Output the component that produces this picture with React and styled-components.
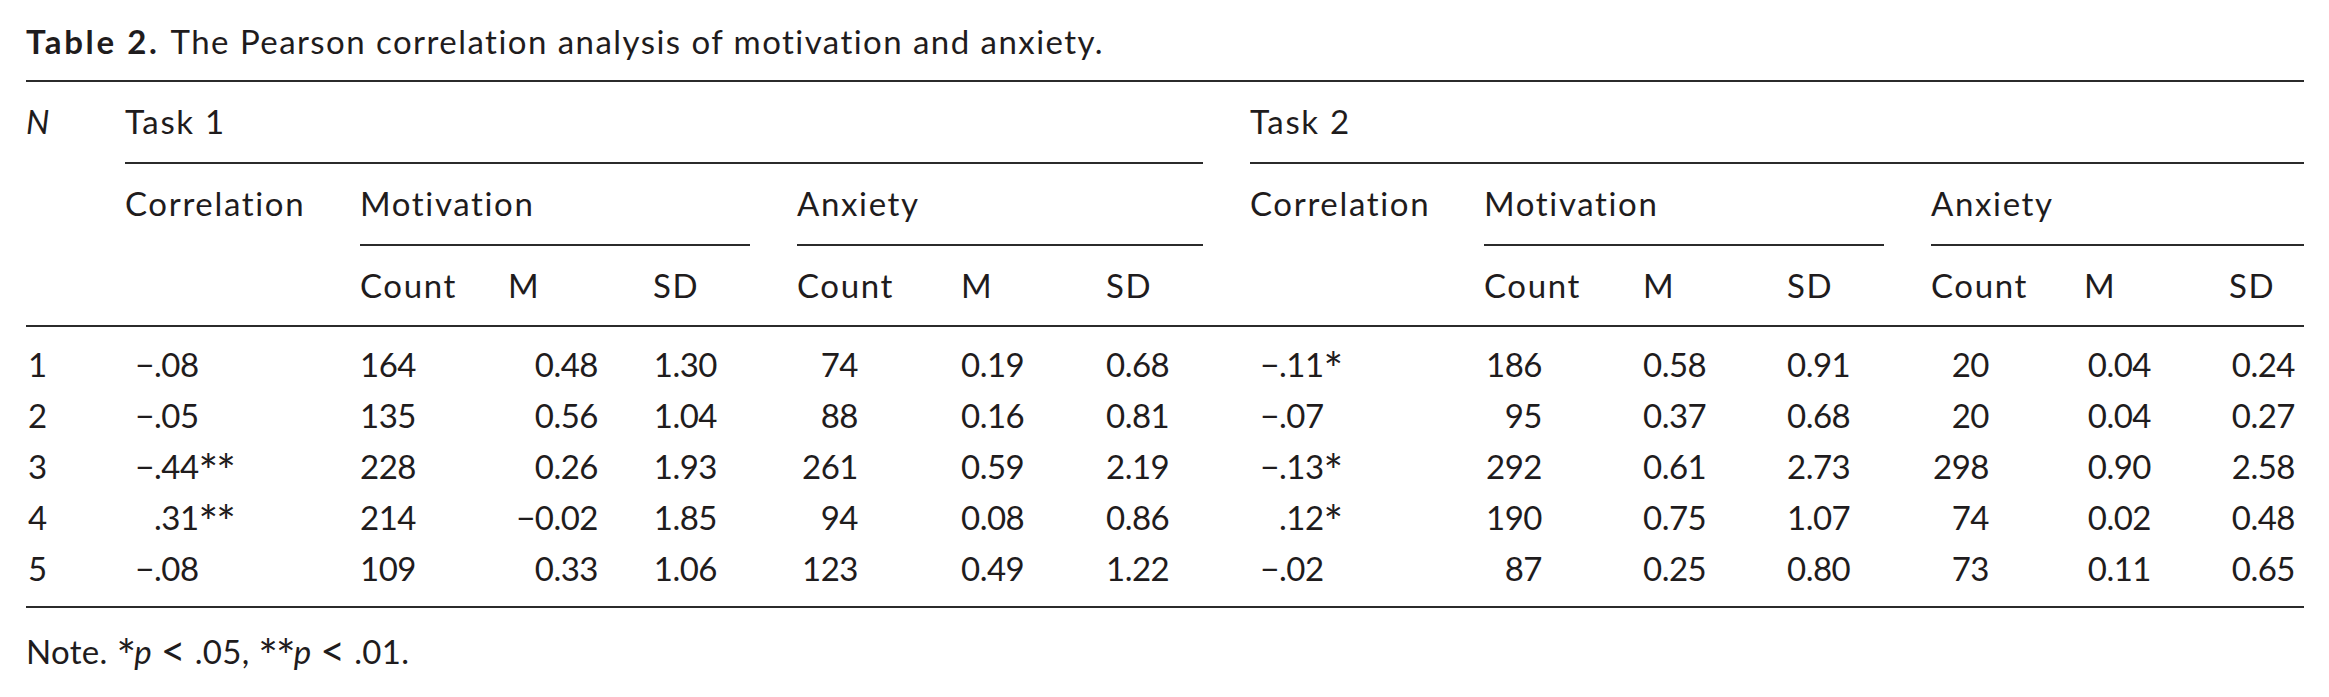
import React from 'react';
import styled, { createGlobalStyle } from 'styled-components';

const COLS = '99px 235px 148px 145px 144px 164px 145px 144px 234px 159px 144px 144px 153px 145px 75px';
const RULE = '2px solid #2b2b2b';

const GlobalStyle = createGlobalStyle`
  body {
    margin: 0;
    background: #ffffff;
    color: #1f1c1d;
    font-family: Lato, 'Open Sans', sans-serif;
  }
`;

const Page = styled.div`
  width: 2278px;
  padding: 21px 0 0 26px;
  font-size: 33px;
  letter-spacing: 0.05em;
`;

// Caption above the table
const Caption = styled.div`
  line-height: 40px;
  margin-bottom: 19px;
  white-space: nowrap;
  letter-spacing: 0.044em;
`;

const CaptionLabel = styled.span`
  font-weight: 700;
  letter-spacing: 0.08em;
  margin-right: 11px;
`;

const Table = styled.div`
  border-top: ${RULE};
`;

// Header block: three rows of spanning labels
const Head = styled.div`
  display: grid;
  grid-template-columns: ${COLS};
  grid-template-rows: 82px 82px 79px;
  border-bottom: ${RULE};
`;

const HeadCell = styled.div`
  grid-column: ${p => p.$col} / span ${p => p.$span || 1};
  grid-row: ${p => p.$row};
  line-height: 79px;
  white-space: nowrap;
  border-bottom: ${p => (p.$rule ? RULE : 'none')};
  margin-right: ${p => (p.$gap ? 47 : 0)}px;
`;

const Italic = styled.span`
  font-style: italic;
`;

// Data block
const Body = styled.div`
  display: grid;
  grid-template-columns: ${COLS};
  grid-auto-rows: 51px;
  line-height: 51px;
  letter-spacing: -0.5px;
  padding: 12px 0 12px;
  border-bottom: ${RULE};
`;

const Cell = styled.div`
  white-space: nowrap;
  padding-left: ${p => p.$pad || 0}px;
`;

const Num = styled.span`
  display: inline-block;
  width: ${p => p.$w}px;
  text-align: right;
`;

const Sign = styled.span`
  display: inline-block;
  width: 20px;
  text-align: right;
`;

const Star = styled.span`
  font-size: 1.4em;
  line-height: 0;
  letter-spacing: -2px;
  vertical-align: -9px;
`;

const Less = styled.span`
  font-size: 1.3em;
  line-height: 0;
  vertical-align: -2px;
`;

const Note = styled.p`
  margin: 23px 0 0;
  line-height: 40px;
  letter-spacing: 0.01em;
`;

const T1_W = [54, 90, 64, 61, 62, 62];
const T2_W = [58, 62, 60, 58, 67, 66];

const rows = [
  { n: '1', t1: ['−.08', '164', '0.48', '1.30', '74', '0.19', '0.68'], t2: ['−.11*', '186', '0.58', '0.91', '20', '0.04', '0.24'] },
  { n: '2', t1: ['−.05', '135', '0.56', '1.04', '88', '0.16', '0.81'], t2: ['−.07', '95', '0.37', '0.68', '20', '0.04', '0.27'] },
  { n: '3', t1: ['−.44**', '228', '0.26', '1.93', '261', '0.59', '2.19'], t2: ['−.13*', '292', '0.61', '2.73', '298', '0.90', '2.58'] },
  { n: '4', t1: ['.31**', '214', '−0.02', '1.85', '94', '0.08', '0.86'], t2: ['.12*', '190', '0.75', '1.07', '74', '0.02', '0.48'] },
  { n: '5', t1: ['−.08', '109', '0.33', '1.06', '123', '0.49', '1.22'], t2: ['−.02', '87', '0.25', '0.80', '73', '0.11', '0.65'] },
];

// correlation values are aligned on the decimal point
const Corr = ({ value }) => {
  const [, sign, num, stars] = value.match(/^(−?)([.\d]+)(\**)$/);
  return (
    <Cell $pad={9}>
      <Sign>{sign}</Sign>
      {num}
      {stars && <Star>{stars}</Star>}
    </Cell>
  );
};

const TaskCells = ({ values, widths }) => (
  <>
    <Corr value={values[0]} />
    {values.slice(1).map((v, i) => (
      <Cell key={i}>
        <Num $w={widths[i]}>{v}</Num>
      </Cell>
    ))}
  </>
);

const SubHeads = ({ start }) =>
  ['Count', 'M', 'SD', 'Count', 'M', 'SD'].map((label, i) => (
    <HeadCell key={label + i} $col={start + i} $row={3}>
      {label}
    </HeadCell>
  ));

const App = () => (
  <Page>
    <GlobalStyle />
    <Caption>
      <CaptionLabel>Table 2.</CaptionLabel>
      The Pearson correlation analysis of motivation and anxiety.
    </Caption>
    <Table>
      <Head>
        <HeadCell $col={1} $row={1}><Italic>N</Italic></HeadCell>
        <HeadCell $col={2} $span={7} $row={1} $rule $gap>Task 1</HeadCell>
        <HeadCell $col={9} $span={7} $row={1} $rule>Task 2</HeadCell>

        <HeadCell $col={2} $row={2}>Correlation</HeadCell>
        <HeadCell $col={3} $span={3} $row={2} $rule $gap>Motivation</HeadCell>
        <HeadCell $col={6} $span={3} $row={2} $rule $gap>Anxiety</HeadCell>
        <HeadCell $col={9} $row={2}>Correlation</HeadCell>
        <HeadCell $col={10} $span={3} $row={2} $rule $gap>Motivation</HeadCell>
        <HeadCell $col={13} $span={3} $row={2} $rule>Anxiety</HeadCell>

        <SubHeads start={3} />
        <SubHeads start={10} />
      </Head>
      <Body>
        {rows.map(r => (
          <React.Fragment key={r.n}>
            <Cell $pad={2}>{r.n}</Cell>
            <TaskCells values={r.t1} widths={T1_W} />
            <TaskCells values={r.t2} widths={T2_W} />
          </React.Fragment>
        ))}
      </Body>
    </Table>
    <Note>
      Note. <Star>*</Star><Italic>p</Italic> <Less>&lt;</Less> .05, <Star>**</Star><Italic>p</Italic> <Less>&lt;</Less> .01.
    </Note>
  </Page>
);

export default App;
